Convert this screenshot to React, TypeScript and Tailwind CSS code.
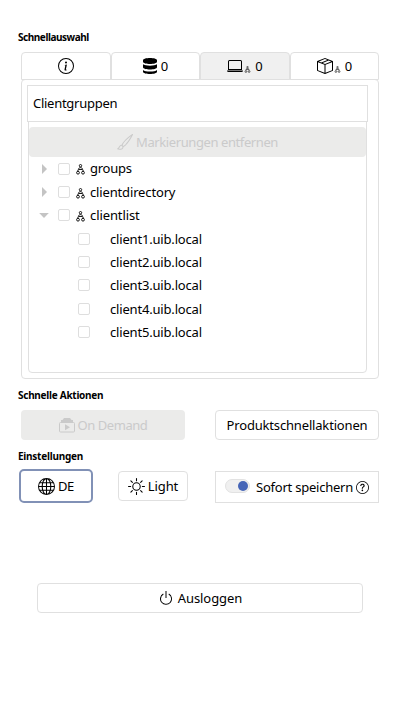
import React from "react";
import {
  BsBoxSeam,
  BsBrush,
  BsGlobe,
  BsInfoCircle,
  BsLaptop,
  BsPower,
  BsQuestionCircle,
  BsSun,
} from "react-icons/bs";

function GroupIcon({ className }: { className: string }) {
  return (
    <svg viewBox="0 0 9 11" className={className} fill="none" stroke="currentColor" strokeWidth=".9">
      <circle cx="4.5" cy="1.7" r="1.2" />
      <path d="M2.4 5.5C2.4 3 6.6 3 6.6 5.5z" />
      <circle cx="2" cy="8.7" r="1.4" />
      <circle cx="7" cy="8.7" r="1.4" />
      <path d="M1 6.4h1.8M6.2 6.4H8" strokeWidth=".6" />
    </svg>
  );
}

function DatabaseIcon() {
  return (
    <svg viewBox="0 0 14 16" className="h-4 w-3.5" fill="currentColor">
      <path d="M0 2.3C0-.7 14-.7 14 2.3v1.4c0 3-14 3-14 0zM0 6.3c2 1.9 12 1.9 14 0v3c0 3-14 3-14 0zM0 12c2 2 12 2 14 0v1.7c0 3-14 3-14 0z" />
    </svg>
  );
}

function PlayStackIcon() {
  return (
    <svg viewBox="0 0 16 15" className="h-[15px] w-4" fill="none" stroke="currentColor">
      <path d="M5 0h6l1.5 2H14v2H2V2h1.5z" fill="currentColor" stroke="none" />
      <rect x=".5" y="4.5" width="15" height="9.5" rx="1" />
      <path d="M6 6.2v6l5-3z" fill="currentColor" stroke="none" />
    </svg>
  );
}

function Heading({ children, className }: { children: React.ReactNode; className: string }) {
  return (
    <h2 className={`pl-[18px] text-[10px] leading-[14px] font-bold whitespace-nowrap ${className}`}>
      {children}
    </h2>
  );
}

const groups = [
  { name: "groups", open: false, text: "tracking-[-0.25px]" },
  { name: "clientdirectory", open: false, text: "tracking-[-0.15px]" },
  { name: "clientlist", open: true, text: "tracking-[-0.1px]" },
];
const clients = ["client1", "client2", "client3", "client4", "client5"];

const tab = "flex h-7 items-center justify-center rounded-t border border-[#e0e0e0]";
const box = "size-3 shrink-0 rounded-[2px] border border-[#dedede]";
const button = "flex h-[30px] items-center justify-center rounded border border-[#e0e0e0] whitespace-nowrap";

export default function App() {
  return (
    <main className="h-[720px] w-[400px] bg-white pt-[30px] font-['Noto_Sans',sans-serif] text-[13px] leading-none text-black">
      <Heading className="tracking-[-0.45px]">Schnellauswahl</Heading>

      <div className="mx-[21px] mt-2 grid grid-cols-[90px_89px_90px_89px]">
        <div className={tab}><BsInfoCircle className="size-4" /></div>
        <div className={`${tab} gap-1`}><DatabaseIcon /><span>0</span></div>
        <div className={`${tab} bg-[#f0f0f0]`}>
          <BsLaptop className="size-4" />
          <GroupIcon className="mt-1.5 ml-px h-[7px] w-[7px]" />
          <span className="ml-1">0</span>
        </div>
        <div className={tab}>
          <BsBoxSeam className="size-4" />
          <GroupIcon className="mt-1.5 ml-px h-[7px] w-[7px]" />
          <span className="ml-1">0</span>
        </div>
      </div>

      <section className="mx-[21px] -mt-px h-[300px] rounded border border-[#e0e0e0] px-[5px] pt-[5px]">
        <div className="-mr-px flex h-[37px] w-[341px] items-center border border-[#e0e0e0] pl-[5px] tracking-[-0.27px]">Clientgruppen</div>
        <div className="-mt-px ml-px h-[252px] w-[339px] rounded-b border border-[#e0e0e0] pt-[5px]">
          <div className="flex h-[30px] items-center justify-center gap-[3px] rounded bg-[#ebebea] text-[#cacaca]">
            <BsBrush className="size-4" /><span className="tracking-[-0.41px]">Markierungen entfernen</span>
          </div>
          <div className="grid auto-rows-[23.35px]">
            {groups.map((g) => (
              <div key={g.name} className="flex items-center pl-2.5">
                <svg viewBox="0 0 10 10" className="size-2.5 text-[#c4c4c4]" fill="currentColor">
                  {g.open ? <path d="M.2 3h9.6L5 8z" /> : <path d="M3 0v10L8 5z" />}
                </svg>
                <span className={`${box} ml-[9px]`} />
                <GroupIcon className="mt-[2px] ml-[6px] h-[11px] w-[9px]" />
                <span className={`ml-[5px] ${g.text}`}>{g.name}</span>
              </div>
            ))}
            {clients.map((c) => (
              <div key={c} className="flex items-center pl-[49px]">
                <span className={box} />
                <span className="ml-[20px] pt-px tracking-[-0.18px]">{c}.uib.local</span>
              </div>
            ))}
          </div>
        </div>
      </section>

      <Heading className="mt-[9px] tracking-[-0.27px]">Schnelle Aktionen</Heading>
      <div className="mx-[21px] mt-2 flex justify-between">
        <button className="flex h-[30px] w-[164px] items-center justify-center gap-[3px] rounded bg-[#ebebea] text-[#cacaca]">
          <PlayStackIcon /><span className="tracking-[-0.45px]">On Demand</span>
        </button>
        <button className={`${button} w-[164px] tracking-[-0.17px]`}>Produktschnellaktionen</button>
      </div>

      <Heading className="mt-[9px] tracking-[-0.25px]">Einstellungen</Heading>
      <div className="mr-[21px] ml-[19px] mt-[6px] flex items-start">
        <button className="flex h-[34px] w-[74px] items-center justify-center gap-[3px] rounded-[5px] border-2 border-[#8191b6]">
          <BsGlobe className="size-[17px]" /><span className="tracking-[-0.4px]">DE</span>
        </button>
        <button className={`${button} mt-[2px] ml-[25px] w-[70px] gap-[3px]`}>
          <BsSun className="size-[17px]" /><span className="tracking-[-0.1px]">Light</span>
        </button>
        <div className="mt-[2px] ml-[27px] flex h-8 w-[164px] items-center border border-[#e0e0e0] pl-[9px] whitespace-nowrap">
          <span className="mb-0.5 flex h-3.5 w-[25px] shrink-0 items-center justify-end rounded-full border border-[#e2e2e2] bg-[#f0f0f0] pr-px">
            <span className="size-2.5 rounded-full bg-[#4565b7]" />
          </span>
          <span className="ml-[6px] tracking-[-0.23px]">Sofort speichern</span>
          <BsQuestionCircle className="ml-[3px] size-[13px] shrink-0" />
        </div>
      </div>

      <button className={`${button} mt-[80px] ml-[37px] w-[326px] gap-[4px]`}>
        <BsPower className="size-4" /><span className="tracking-[-0.05px]">Ausloggen</span>
      </button>
    </main>
  );
}
